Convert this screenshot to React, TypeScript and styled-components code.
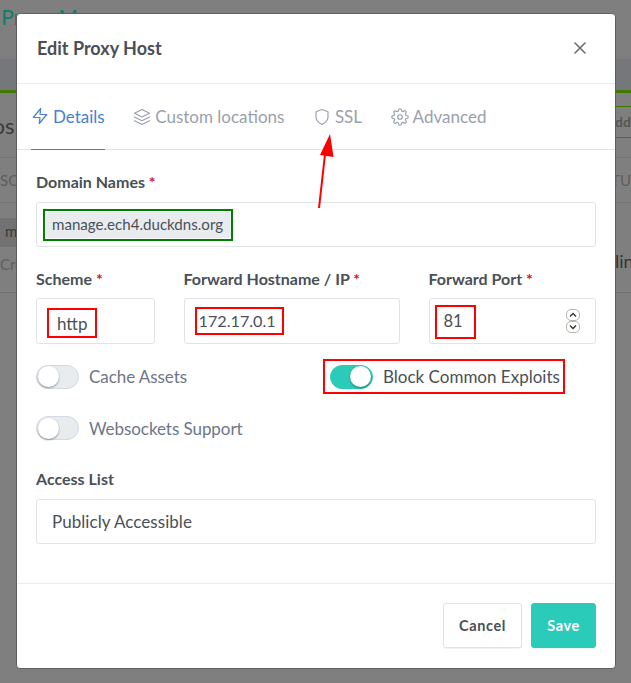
import React from "react";
import styled, { createGlobalStyle } from "styled-components";
import { FiZap, FiLayers, FiShield, FiSettings, FiX } from "react-icons/fi";

const Global = createGlobalStyle`
  html, body { margin: 0; padding: 0; background: #808080; }
  * { box-sizing: border-box; }
  body { font-family: "Lato", "Open Sans", sans-serif; overflow: hidden; }
`;

const Screen = styled.div`
  position: relative;
  width: 631px;
  height: 683px;
  overflow: hidden;
  color: #4a4d52;
`;

const Page = styled.div`
  display: flex;
  flex-direction: column;
  height: 683px;
  background: #7f7f7f;
`;

const TopBar = styled.div`
  height: 60px;
  border-bottom: 1px solid #767676;
  padding: 2px 0 0 0;
  font-size: 21px;
  line-height: 30px;
  color: #157a6e;
  white-space: nowrap;
  margin-left: -58px;
`;

const NavBand = styled.div`
  height: 30px;
  background: #76777a;
`;

const GreenRule = styled.div`
  height: 3px;
  background: #3f7a00;
`;

const CardHead = styled.div`
  height: 65px;
  display: flex;
  justify-content: space-between;
  align-items: center;
  border-bottom: 1px solid #757575;
  font-size: 22px;
  color: #3a3a3a;
  overflow: hidden;
`;

const HeadTitle = styled.span`
  margin-left: -24px;
`;

const AddButton = styled.span`
  width: 40px;
  height: 32px;
  border-top: 1px solid #3f7a00;
  border-bottom: 1px solid #3f7a00;
  font-size: 14px;
  line-height: 30px;
  color: #555;
  text-align: right;
  font-weight: 700;
  margin-top: -6px;
`;

const TableHead = styled.div`
  height: 45px;
  display: flex;
  justify-content: space-between;
  align-items: center;
  border-bottom: 1px solid #757575;
  font-size: 15px;
  color: #5e5e5e;
`;

const TableRow = styled.div`
  height: 90px;
  display: flex;
  justify-content: space-between;
  border-bottom: 1px solid #6f7074;
`;

const RowLeft = styled.div`
  display: flex;
  flex-direction: column;
  align-items: flex-start;
  padding-top: 15px;
  gap: 8px;
  font-size: 15px;
  color: #5e5e5e;
`;

const RowTag = styled.span`
  width: 30px;
  height: 29px;
  background: #727272;
  line-height: 27px;
  padding-left: 5px;
  color: #3a3a3a;
`;

const RowRight = styled.span`
  font-size: 18px;
  color: #333;
  padding-top: 47px;
  margin-right: -12px;
`;

const Modal = styled.div`
  position: absolute;
  left: 16px;
  top: 13px;
  width: 600px;
  height: 656px;
  background: #fff;
  border: 1px solid #5f5f5f;
  border-radius: 4px;
  display: flex;
  flex-direction: column;
`;

const ModalHeader = styled.div`
  height: 70px;
  flex: none;
  display: flex;
  align-items: center;
  justify-content: space-between;
  padding: 0 25px 2px 20px;
  border-bottom: 1px solid #e9ecef;
`;

const Title = styled.h5`
  margin: 0;
  font-size: 18px;
  font-weight: 700;
  color: #495057;
`;

const Close = styled.span`
  display: flex;
  color: #6e6e6e;
`;

const Tabs = styled.div`
  height: 66px;
  flex: none;
  display: flex;
  gap: 28.5px;
  padding: 0 14px;
  border-bottom: 1px solid #e0e2e6;
`;

const Tab = styled.div<{ $active?: boolean }>`
  display: flex;
  align-items: center;
  gap: 4px;
  height: 66px;
  padding: 0 0 1px 0;
  font-size: 17px;
  color: ${(p) => (p.$active ? "#467fcf" : "#9aa0ac")};
  border-bottom: ${(p) => (p.$active ? "1px solid #467fcf" : "none")};
  svg { stroke-width: 1.6; }
`;

const Body = styled.div`
  flex: 1;
  padding: 22px 19px 0 19px;
  display: flex;
  flex-direction: column;
`;

const Label = styled.label`
  display: block;
  height: 20px;
  line-height: 20px;
  font-size: 16px;
  font-weight: 700;
  color: #495057;
  margin-bottom: 9px;
`;

const Req = styled.span`
  color: #cd201f;
`;

const DomainBox = styled.div`
  height: 45px;
  margin-top: 1px;
  border: 1px solid #dfe3ea;
  border-radius: 3px;
  display: flex;
  align-items: center;
  padding-left: 6px;
  margin-bottom: 22px;
`;

const GreenMark = styled.span`
  border: 2px solid #008000;
  padding: 1px 0 1px 1px;
  height: 32px;
  display: flex;
`;

const Chip = styled.span`
  background: #e9ecef;
  border-radius: 3px;
  height: 26px;
  line-height: 25px;
  padding: 0 6px;
  font-size: 15.1px;
  color: #495057;
  white-space: nowrap;
  width: 185px;
`;

const Row = styled.div`
  display: grid;
  grid-template-columns: 119px 216.5px 167.5px;
  column-gap: 28.5px;
`;

const InputBox = styled.div`
  height: 46px;
  border: 1px solid #dfe3ea;
  border-radius: 3px;
  display: flex;
  align-items: center;
  justify-content: space-between;
  padding-left: 10px;
  padding-right: 15px;
  font-size: 16px;
  color: #495057;
`;

const RedMark = styled.span<{ $w: number; $h: number }>`
  border: 2px solid #f00;
  width: ${(p) => p.$w}px;
  height: ${(p) => p.$h}px;
  display: flex;
  align-items: center;
  padding-left: 8px;
  line-height: 1;
  font-size: 17px;
  margin-top: 4px;
`;

const HostMark = styled(RedMark)`
  padding-left: 2px;
  margin-top: 0;
  font-size: 16.2px;
`;

const PortMark = styled(RedMark)`
  padding-left: 7px;
  margin-top: 1px;
  margin-left: -5px;
  font-size: 16.5px;
`;

const Stepper = styled.span`
  display: flex;
  flex-direction: column;
`;

const Step = styled.span`
  width: 14px;
  height: 12px;
  border: 1px solid #b8b4ae;
  border-radius: 5px;
  display: flex;
  align-items: center;
  justify-content: center;
  background: #fff;
  svg { display: block; }
`;

const Toggles = styled.div`
  display: grid;
  grid-template-columns: 287px 1fr;
  margin-top: 15px;
  height: 34px;
  align-items: center;
`;

const ToggleItem = styled.div`
  display: flex;
  align-items: center;
  gap: 10px;
  font-size: 17px;
  letter-spacing: -0.06px;
  color: #6e7687;
`;

const Marked = styled.div`
  display: flex;
  align-items: center;
  gap: 10px;
  width: 242px;
  height: 35px;
  border: 2px solid #f00;
  padding-left: 5px;
  font-size: 17px;
  color: #495057;
`;

const Switch = styled.span<{ $on?: boolean }>`
  width: 43px;
  height: 24px;
  flex: none;
  border-radius: 12px;
  display: flex;
  align-items: center;
  justify-content: ${(p) => (p.$on ? "flex-end" : "flex-start")};
  padding: 1px;
  background: ${(p) => (p.$on ? "#2bcbba" : "#e9ecef")};
  border: 1px solid ${(p) => (p.$on ? "#2bcbba" : "#d5dae2")};
`;

const Knob = styled.span`
  width: 21px;
  height: 21px;
  border-radius: 50%;
  background: #fff;
  box-shadow: 0 1px 2px rgba(0, 0, 0, 0.4);
`;

const SecondToggle = styled.div`
  margin-top: 18px;
  height: 34px;
  display: flex;
  align-items: center;
  margin-bottom: 24px;
`;

const AccessBox = styled(InputBox)`
  height: 45px;
  margin-top: 1px;
  padding-left: 15px;
  font-size: 17px;
  letter-spacing: 0.05px;
`;

const Footer = styled.div`
  height: 85px;
  flex: none;
  border-top: 1px solid #e9ecef;
  display: flex;
  justify-content: flex-end;
  gap: 9px;
  padding: 19px 19px 0 0;
`;

const Btn = styled.span<{ $primary?: boolean }>`
  height: 45px;
  width: ${(p) => (p.$primary ? 65 : 79)}px;
  border-radius: 3px;
  display: flex;
  align-items: center;
  justify-content: center;
  font-size: 14.5px;
  font-weight: 700;
  letter-spacing: 0.6px;
  background: ${(p) => (p.$primary ? "#2bcbba" : "#fff")};
  color: ${(p) => (p.$primary ? "#fff" : "#495057")};
  border: 1px solid ${(p) => (p.$primary ? "#2bcbba" : "#e0e2e8")};
  box-shadow: 0 1px 1px rgba(0, 0, 0, 0.06);
`;

const Arrow = styled.svg`
  position: absolute;
  left: 310px;
  top: 125px;
`;

const Chevron = ({ up }: { up?: boolean }) => (
  <svg width="8" height="6" viewBox="0 0 8 6" fill="none" stroke="#333" strokeWidth="1.4">
    <path d={up ? "M1 4.5 4 1.5 7 4.5" : "M1 1.5 4 4.5 7 1.5"} />
  </svg>
);

export default function App() {
  return (
    <Screen>
      <Global />
      <Page>
        <TopBar>Nginx Proxy Manager</TopBar>
        <NavBand />
        <GreenRule />
        <CardHead>
          <HeadTitle>Hos</HeadTitle>
          <AddButton>Add</AddButton>
        </CardHead>
        <TableHead>
          <span>SO</span>
          <span>STATU</span>
        </TableHead>
        <TableRow>
          <RowLeft>
            <RowTag>m</RowTag>
            <span>Cre</span>
          </RowLeft>
          <RowRight>Online</RowRight>
        </TableRow>
      </Page>
      <Modal>
        <ModalHeader>
          <Title>Edit Proxy Host</Title>
          <Close>
            <FiX size={20} />
          </Close>
        </ModalHeader>
        <Tabs>
          <Tab $active>
            <FiZap size={18} />
            Details
          </Tab>
          <Tab>
            <FiLayers size={18} />
            Custom locations
          </Tab>
          <Tab>
            <FiShield size={18} />
            SSL
          </Tab>
          <Tab>
            <FiSettings size={18} />
            Advanced
          </Tab>
        </Tabs>
        <Body>
          <Label>
            Domain Names <Req>*</Req>
          </Label>
          <DomainBox>
            <GreenMark>
              <Chip>manage.ech4.duckdns.org</Chip>
            </GreenMark>
          </DomainBox>
          <Row>
            <div>
              <Label>
                Scheme <Req>*</Req>
              </Label>
              <InputBox>
                <RedMark $w={50} $h={30}>http</RedMark>
              </InputBox>
            </div>
            <div>
              <Label>
                Forward Hostname / IP <Req>*</Req>
              </Label>
              <InputBox>
                <HostMark $w={89} $h={28}>172.17.0.1</HostMark>
              </InputBox>
            </div>
            <div>
              <Label>
                Forward Port <Req>*</Req>
              </Label>
              <InputBox>
                <PortMark $w={41} $h={34}>81</PortMark>
                <Stepper>
                  <Step>
                    <Chevron up />
                  </Step>
                  <Step>
                    <Chevron />
                  </Step>
                </Stepper>
              </InputBox>
            </div>
          </Row>
          <Toggles>
            <ToggleItem>
              <Switch>
                <Knob />
              </Switch>
              Cache Assets
            </ToggleItem>
            <Marked>
              <Switch $on>
                <Knob />
              </Switch>
              Block Common Exploits
            </Marked>
          </Toggles>
          <SecondToggle>
            <ToggleItem>
              <Switch>
                <Knob />
              </Switch>
              Websockets Support
            </ToggleItem>
          </SecondToggle>
          <Label>Access List</Label>
          <AccessBox>Publicly Accessible</AccessBox>
        </Body>
        <Footer>
          <Btn>Cancel</Btn>
          <Btn $primary>Save</Btn>
        </Footer>
      </Modal>
      <Arrow width="30" height="90" viewBox="0 0 30 90" fill="none">
        <path d="M9 83 15.5 25" stroke="#f00" strokeWidth="2" />
        <path d="M20 9 23.5 32 10 30Z" fill="#f00" />
      </Arrow>
    </Screen>
  );
}
